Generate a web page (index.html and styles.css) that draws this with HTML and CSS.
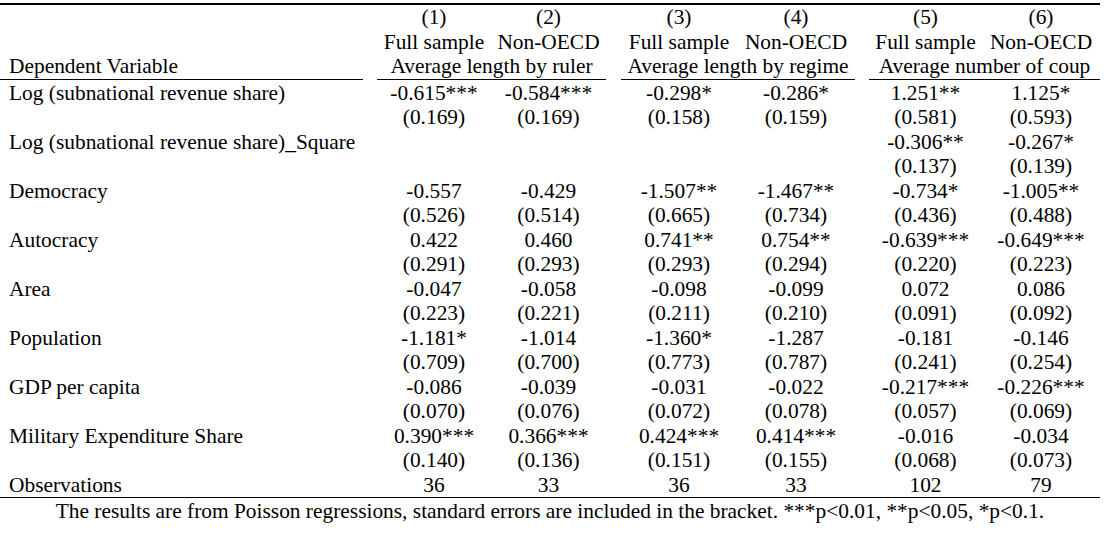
FILE: index.html
```html
<!DOCTYPE html>
<html>
<head>
<meta charset="utf-8">
<link rel="stylesheet" href="styles.css">
</head>
<body>
<div class="page">
<table class="reg">
<colgroup>
<col class="c-label"><col class="c-gap">
<col class="c-1"><col class="c-2"><col class="c-gap2">
<col class="c-3"><col class="c-4"><col class="c-gap">
<col class="c-5"><col class="c-6">
</colgroup>
<thead>
<tr class="h1">
<th class="lab"></th><th class="gap"></th>
<th>(1)</th><th>(2)</th><th class="gap"></th>
<th>(3)</th><th>(4)</th><th class="gap"></th>
<th>(5)</th><th>(6)</th>
</tr>
<tr>
<th class="lab"></th><th class="gap"></th>
<th>Full sample</th><th>Non-OECD</th><th class="gap"></th>
<th>Full sample</th><th>Non-OECD</th><th class="gap"></th>
<th>Full sample</th><th>Non-OECD</th>
</tr>
<tr class="h3">
<th class="lab rule">Dependent Variable</th><th class="gap"></th>
<th class="rule" colspan="2">Average length by ruler</th><th class="gap"></th>
<th class="rule" colspan="2">Average length by regime</th><th class="gap"></th>
<th class="rule" colspan="2">Average number of coup</th>
</tr>
</thead>
<tbody>
<tr class="first"><td class="lab">Log (subnational revenue share)</td><td></td><td>-0.615***</td><td>-0.584***</td><td></td><td>-0.298*</td><td>-0.286*</td><td></td><td>1.251**</td><td>1.125*</td></tr>
<tr><td class="lab"></td><td></td><td>(0.169)</td><td>(0.169)</td><td></td><td>(0.158)</td><td>(0.159)</td><td></td><td>(0.581)</td><td>(0.593)</td></tr>
<tr><td class="lab">Log (subnational revenue share)_Square</td><td></td><td></td><td></td><td></td><td></td><td></td><td></td><td>-0.306**</td><td>-0.267*</td></tr>
<tr><td class="lab"></td><td></td><td></td><td></td><td></td><td></td><td></td><td></td><td>(0.137)</td><td>(0.139)</td></tr>
<tr><td class="lab">Democracy</td><td></td><td>-0.557</td><td>-0.429</td><td></td><td>-1.507**</td><td>-1.467**</td><td></td><td>-0.734*</td><td>-1.005**</td></tr>
<tr><td class="lab"></td><td></td><td>(0.526)</td><td>(0.514)</td><td></td><td>(0.665)</td><td>(0.734)</td><td></td><td>(0.436)</td><td>(0.488)</td></tr>
<tr><td class="lab">Autocracy</td><td></td><td>0.422</td><td>0.460</td><td></td><td>0.741**</td><td>0.754**</td><td></td><td>-0.639***</td><td>-0.649***</td></tr>
<tr><td class="lab"></td><td></td><td>(0.291)</td><td>(0.293)</td><td></td><td>(0.293)</td><td>(0.294)</td><td></td><td>(0.220)</td><td>(0.223)</td></tr>
<tr><td class="lab">Area</td><td></td><td>-0.047</td><td>-0.058</td><td></td><td>-0.098</td><td>-0.099</td><td></td><td>0.072</td><td>0.086</td></tr>
<tr><td class="lab"></td><td></td><td>(0.223)</td><td>(0.221)</td><td></td><td>(0.211)</td><td>(0.210)</td><td></td><td>(0.091)</td><td>(0.092)</td></tr>
<tr><td class="lab">Population</td><td></td><td>-1.181*</td><td>-1.014</td><td></td><td>-1.360*</td><td>-1.287</td><td></td><td>-0.181</td><td>-0.146</td></tr>
<tr><td class="lab"></td><td></td><td>(0.709)</td><td>(0.700)</td><td></td><td>(0.773)</td><td>(0.787)</td><td></td><td>(0.241)</td><td>(0.254)</td></tr>
<tr><td class="lab">GDP per capita</td><td></td><td>-0.086</td><td>-0.039</td><td></td><td>-0.031</td><td>-0.022</td><td></td><td>-0.217***</td><td>-0.226***</td></tr>
<tr><td class="lab"></td><td></td><td>(0.070)</td><td>(0.076)</td><td></td><td>(0.072)</td><td>(0.078)</td><td></td><td>(0.057)</td><td>(0.069)</td></tr>
<tr><td class="lab">Military Expenditure Share</td><td></td><td>0.390***</td><td>0.366***</td><td></td><td>0.424***</td><td>0.414***</td><td></td><td>-0.016</td><td>-0.034</td></tr>
<tr><td class="lab"></td><td></td><td>(0.140)</td><td>(0.136)</td><td></td><td>(0.151)</td><td>(0.155)</td><td></td><td>(0.068)</td><td>(0.073)</td></tr>
<tr class="last"><td class="lab">Observations</td><td></td><td>36</td><td>33</td><td></td><td>36</td><td>33</td><td></td><td>102</td><td>79</td></tr>
</tbody>
</table>
<p class="note">The results are from Poisson regressions, standard errors are included in the bracket. ***p&lt;0.01, **p&lt;0.05, *p&lt;0.1.</p>
</div>
</body>
</html>
```
FILE: styles.css
```css
html, body {
  margin: 0;
  padding: 0;
  background: #ffffff;
}
.page {
  width: 1100px;
  padding-top: 3px;
  font-family: "Liberation Serif", "Times New Roman", serif;
  font-size: 21.4px;
  color: #000000;
}
.reg {
  width: 1100px;
  table-layout: fixed;
  border-collapse: collapse;
  border-spacing: 0;
}
.c-label { width: 363px; }
.c-gap { width: 14px; }
.c-gap2 { width: 15px; }
.c-1 { width: 114px; }
.c-2 { width: 115px; }
.c-3 { width: 116px; }
.c-4 { width: 118px; }
.c-5 { width: 113px; }
.c-6 { width: 118px; }
.reg th, .reg td {
  padding: 0;
  height: 24.5px;
  line-height: 24.5px;
  font-weight: normal;
  text-align: center;
  white-space: nowrap;
  vertical-align: middle;
}
.reg .lab {
  text-align: left;
  padding-left: 9px;
}
.reg .h1 th {
  border-top: 2px solid #000;
}
.reg .rule {
  border-bottom: 1px solid #000;
}
.reg .first td {
  padding-top: 1px;
}
.reg .last td {
  border-bottom: 1px solid #000;
}
.note {
  margin: 1px 0 0;
  text-align: center;
  line-height: 24px;
}
```
